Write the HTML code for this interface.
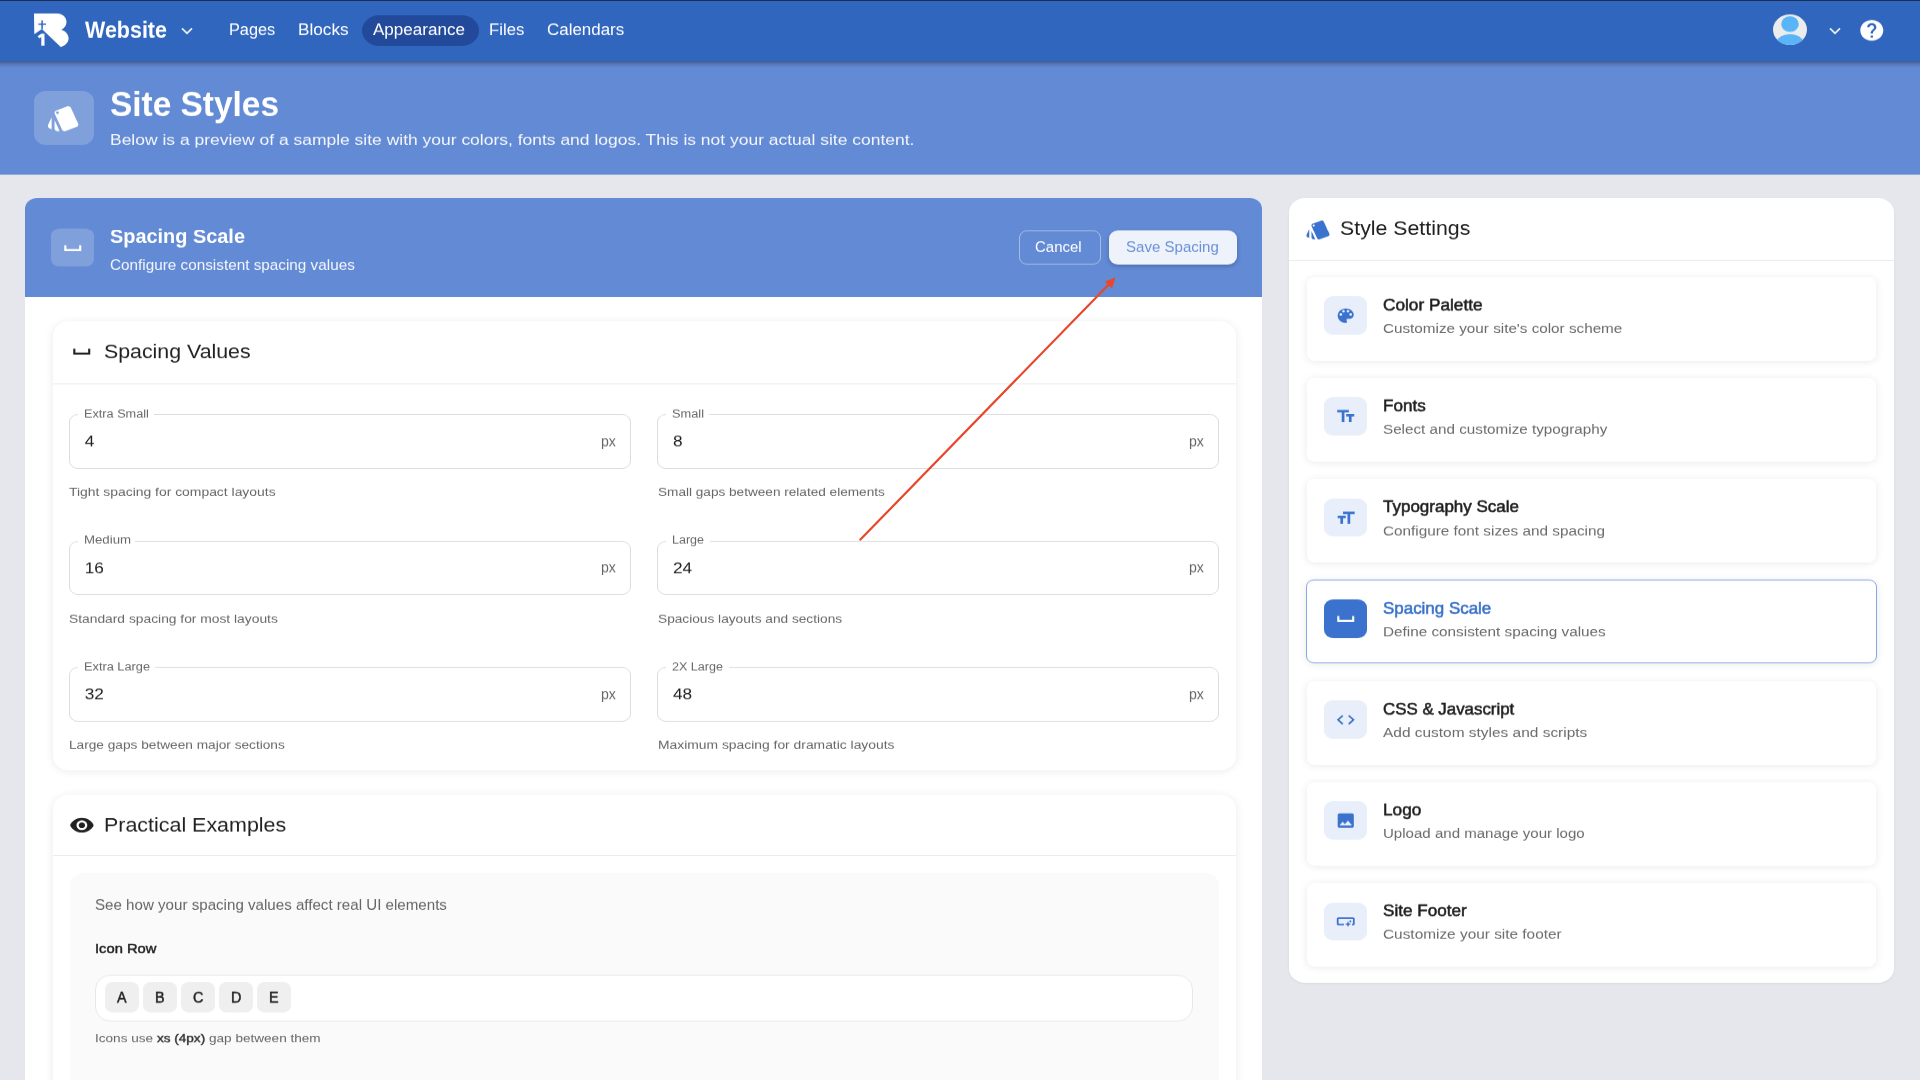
<!DOCTYPE html>
<html><head><meta charset="utf-8"><title>Site Styles</title>
<style>
*{box-sizing:border-box;margin:0;padding:0}
html,body{width:1920px;height:1080px;overflow:hidden;background:#e6e7ec}
#root{position:absolute;left:0;top:0;width:1920px;height:1200px;will-change:transform;transform:scale(1,0.9);transform-origin:0 0;background:#e6e7ec;overflow:hidden;font-family:"Liberation Sans",sans-serif}
.abs{position:absolute}
.tx{position:absolute;white-space:nowrap;transform-origin:0 50%}
.sub{position:absolute;background:#fff;border-radius:16px;box-shadow:0 1px 10px rgba(0,0,0,.085)}
.field{position:absolute;width:562px;height:60.3px;border:1.4px solid #dcdcdc;border-radius:9px}
.item{position:absolute;width:569px;background:#fff;border-radius:8px;box-shadow:0 1px 8px rgba(0,0,0,.09)}
</style></head><body>
<div id="root">
<div class="abs" style="left:0;top:66px;width:1920px;height:127.7px;background:#638ad4;border-bottom:1px solid #5c84d0"></div>
<div class="abs" style="left:0;top:0;width:1920px;height:67.7px;background:#3166be;border-top:1.2px solid #1a2a4c"></div>
<div class="abs" style="left:0;top:67.7px;width:1920px;height:7px;background:linear-gradient(rgba(40,50,80,.55),rgba(40,50,80,.25) 40%,rgba(40,50,80,0))"></div>
<div class="abs" style="left:361.7px;top:17.22px;width:117.2px;height:33.89px;border-radius:20px;background:#22499a"></div>
<div class="abs" style="left:34px;top:101.11px;width:60px;height:60px;border-radius:12px;background:rgba(255,255,255,.19)"></div>
<svg class="abs" style="left:46.10px;top:113.83px;" width="35" height="35" viewBox="0 0 24 24"><path fill="#fff" d="M2.53 19.65l1.34.56v-9.03l-2.43 5.86c-.41 1.02.08 2.19 1.09 2.61zm19.5-3.7L17.07 3.98c-.31-.75-1.04-1.21-1.81-1.23-.26 0-.53.04-.79.15L7.1 5.95c-.75.31-1.21 1.03-1.23 1.8-.01.27.04.54.15.8l4.96 11.97c.31.76 1.05 1.22 1.83 1.23.26 0 .52-.05.77-.15l7.36-3.05c1.02-.42 1.51-1.59 1.09-2.6zM7.88 8.75c-.55 0-1-.45-1-1s.45-1 1-1 1 .45 1 1-.45 1-1 1zm-2 11c0 1.1.9 2 2 2h1.45l-3.45-8.34v6.34z"/></svg>
<div class="abs" style="left:25px;top:220px;width:1237px;height:1000px;background:#fff;border-radius:12px 12px 0 0;overflow:hidden"><div class="abs" style="left:0;top:0;width:100%;height:110.3px;background:#638ad4"></div></div>
<div class="abs" style="left:51.25px;top:253.89px;width:42.6px;height:42.6px;border-radius:8px;background:rgba(255,255,255,.19)"></div>
<svg class="abs" style="left:59.85px;top:262.69px;" width="25.5" height="25.5" viewBox="0 0 24 24"><path fill="#fff" d="M18 9v4H6V9H4v6h16V9z"/></svg>
<div class="abs" style="left:1019px;top:255.56px;width:81.6px;height:38.89px;border:1px solid rgba(255,255,255,.42);border-radius:8px"></div>
<div class="abs" style="left:1108.6px;top:255.56px;width:128.4px;height:38.89px;border-radius:9px;background:#eef2fb;box-shadow:0 2px 4px rgba(20,40,90,.32)"></div>
<div class="sub" style="left:52.6px;top:356.67px;width:1183.1px;height:499.33px"><div class="abs" style="left:0;top:68.89px;width:100%;height:1px;background:#ebebeb"></div></div>
<svg class="abs" style="left:69.35px;top:377.92px;" width="25.5" height="25.5" viewBox="0 0 24 24"><path fill="#212121" d="M18 9v4H6V9H4v6h16V9z"/></svg>
<div class="sub" style="left:52.6px;top:882.67px;width:1183.1px;height:600px"><div class="abs" style="left:0;top:67.33px;width:100%;height:1px;background:#ebebeb"></div></div>
<svg class="abs" style="left:69.20px;top:904.32px;" width="25.8" height="25.8" viewBox="0 0 24 24"><path fill="#212121" d="M12 4.5C7 4.5 2.73 7.61 1 12c1.73 4.39 6 7.5 11 7.5s9.27-3.11 11-7.5c-1.73-4.39-6-7.5-11-7.5zM12 17c-2.76 0-5-2.24-5-5s2.24-5 5-5 5 2.24 5 5-2.24 5-5 5zm0-8c-1.66 0-3 1.34-3 3s1.34 3 3 3 3-1.34 3-3-1.34-3-3-3z"/></svg>
<div class="abs" style="left:70px;top:970.00px;width:1148.5px;height:400px;border-radius:14px;background:#fafafa"></div>
<div class="abs" style="left:95.3px;top:1082.67px;width:1098px;height:51.89px;border:1px solid #e8e8e8;border-radius:16px;background:#fff"></div>
<div class="abs" style="left:104.80px;top:1091.22px;width:33.8px;height:34.2px;border-radius:8px;background:#efefef"></div>
<div class="abs" style="left:142.90px;top:1091.22px;width:33.8px;height:34.2px;border-radius:8px;background:#efefef"></div>
<div class="abs" style="left:181.00px;top:1091.22px;width:33.8px;height:34.2px;border-radius:8px;background:#efefef"></div>
<div class="abs" style="left:219.10px;top:1091.22px;width:33.8px;height:34.2px;border-radius:8px;background:#efefef"></div>
<div class="abs" style="left:257.20px;top:1091.22px;width:33.8px;height:34.2px;border-radius:8px;background:#efefef"></div>
<div class="abs" style="left:1289.3px;top:220.33px;width:605px;height:871.56px;background:#fff;border-radius:16px;box-shadow:0 1px 3px rgba(0,0,0,.06)"><div class="abs" style="left:0;top:68.56px;width:100%;height:1.2px;background:#ebebeb"></div></div>
<svg class="abs" style="left:1305.15px;top:241.75px;" width="26.5" height="26.5" viewBox="0 0 24 24"><path fill="#3a72cd" d="M2.53 19.65l1.34.56v-9.03l-2.43 5.86c-.41 1.02.08 2.19 1.09 2.61zm19.5-3.7L17.07 3.98c-.31-.75-1.04-1.21-1.81-1.23-.26 0-.53.04-.79.15L7.1 5.95c-.75.31-1.21 1.03-1.23 1.8-.01.27.04.54.15.8l4.96 11.97c.31.76 1.05 1.22 1.83 1.23.26 0 .52-.05.77-.15l7.36-3.05c1.02-.42 1.51-1.59 1.09-2.6zM7.88 8.75c-.55 0-1-.45-1-1s.45-1 1-1 1 .45 1 1-.45 1-1 1zm-2 11c0 1.1.9 2 2 2h1.45l-3.45-8.34v6.34z"/></svg>
<div class="item" style="left:1307px;top:307.78px;height:92.89px;"></div>
<div class="abs" style="left:1324.2px;top:329.22px;width:42.8px;height:42.8px;border-radius:9px;background:#e9effa"></div>
<svg class="abs" style="left:1334.85px;top:340.14px;" width="21.5" height="21.5" viewBox="0 0 24 24"><path fill="#3a72cd" d="M12 3c-4.97 0-9 4.03-9 9s4.03 9 9 9c.83 0 1.5-.67 1.5-1.5 0-.39-.15-.74-.39-1.01-.23-.26-.38-.61-.38-.99 0-.83.67-1.5 1.5-1.5H16c2.76 0 5-2.24 5-5 0-4.42-4.03-8-9-8zm-5.5 9c-.83 0-1.5-.67-1.5-1.5S5.67 9 6.5 9 8 9.67 8 10.5 7.33 12 6.5 12zm3-4C8.67 8 8 7.33 8 6.5S8.67 5 9.5 5s1.5.67 1.5 1.5S10.33 8 9.5 8zm5 0c-.83 0-1.5-.67-1.5-1.5S13.67 5 14.5 5s1.5.67 1.5 1.5S15.33 8 14.5 8zm3 4c-.83 0-1.5-.67-1.5-1.5S16.67 9 17.5 9s1.5.67 1.5 1.5-.67 1.5-1.5 1.5z"/></svg>
<div class="item" style="left:1307px;top:420.00px;height:92.89px;"></div>
<div class="abs" style="left:1324.2px;top:441.44px;width:42.8px;height:42.8px;border-radius:9px;background:#e9effa"></div>
<svg class="abs" style="left:1334.85px;top:452.36px;" width="21.5" height="21.5" viewBox="0 0 24 24"><path fill="#3a72cd" d="M2.5 4v3h5v12h3V7h5V4h-13zm19 5h-9v3h3v7h3v-7h3V9z"/></svg>
<div class="item" style="left:1307px;top:532.22px;height:92.89px;"></div>
<div class="abs" style="left:1324.2px;top:553.67px;width:42.8px;height:42.8px;border-radius:9px;background:#e9effa"></div>
<svg class="abs" style="left:1334.85px;top:564.58px;" width="21.5" height="21.5" viewBox="0 0 24 24"><path fill="#3a72cd" d="M9 4v3h5v12h3V7h5V4H9zm-6 8h3v7h3v-7h3V9H3v3z"/></svg>
<div class="item" style="left:1307px;top:644.44px;height:92.89px;border:1.5px solid #86a8e6;left:1306px!important;width:571px;"></div>
<div class="abs" style="left:1324.2px;top:665.89px;width:42.8px;height:42.8px;border-radius:9px;background:#3a72cd"></div>
<svg class="abs" style="left:1332.85px;top:674.81px;" width="25.5" height="25.5" viewBox="0 0 24 24"><path fill="#fff" d="M18 9v4H6V9H4v6h16V9z"/></svg>
<div class="item" style="left:1307px;top:756.67px;height:92.89px;"></div>
<div class="abs" style="left:1324.2px;top:778.11px;width:42.8px;height:42.8px;border-radius:9px;background:#e9effa"></div>
<svg class="abs" style="left:1334.85px;top:789.03px;" width="21.5" height="21.5" viewBox="0 0 24 24"><path fill="#3a72cd" d="M9.4 16.6L4.8 12l4.6-4.6L8 6l-6 6 6 6 1.4-1.4zm5.2 0l4.6-4.6-4.6-4.6L16 6l6 6-6 6-1.4-1.4z"/></svg>
<div class="item" style="left:1307px;top:868.89px;height:92.89px;"></div>
<div class="abs" style="left:1324.2px;top:890.33px;width:42.8px;height:42.8px;border-radius:9px;background:#e9effa"></div>
<svg class="abs" style="left:1334.85px;top:901.25px;" width="21.5" height="21.5" viewBox="0 0 24 24"><path fill="#3a72cd" d="M21 19V5c0-1.1-.9-2-2-2H5c-1.1 0-2 .9-2 2v14c0 1.1.9 2 2 2h14c1.1 0 2-.9 2-2zM8.5 13.5l2.5 3.01L14.5 12l4.5 6H5l3.5-4.5z"/></svg>
<div class="item" style="left:1307px;top:981.11px;height:92.89px;"></div>
<div class="abs" style="left:1324.2px;top:1002.56px;width:42.8px;height:42.8px;border-radius:9px;background:#e9effa"></div>
<svg class="abs" style="left:1334.85px;top:1013.47px;" width="21.5" height="21.5" viewBox="0 0 24 24"><path fill="#3a72cd" d="M22 9v6c0 1.1-.9 2-2 2h-1v-2h1V9H4v6h6v2H4c-1.1 0-2-.9-2-2V9c0-1.1.9-2 2-2h16c1.1 0 2 .9 2 2zm-7.5 10 1.09-2.41L18 15.5l-2.41-1.09L14.5 12l-1.09 2.41L11 15.5l2.41 1.09L14.5 19zm2.5-5 .62-1.38L19 12l-1.38-.62L17 10l-.62 1.38L15 12l1.38.62L17 14z"/></svg>
<div class="field" style="left:69.3px;top:460.22px"></div>
<div class="field" style="left:657.4px;top:460.22px"></div>
<div class="field" style="left:69.3px;top:600.78px"></div>
<div class="field" style="left:657.4px;top:600.78px"></div>
<div class="field" style="left:69.3px;top:741.33px"></div>
<div class="field" style="left:657.4px;top:741.33px"></div>
<div class="abs" style="left:77.80px;top:453.11px;width:76.68px;height:13.33px;background:#fff"></div>
<div class="abs" style="left:665.90px;top:453.11px;width:43.43px;height:13.33px;background:#fff"></div>
<div class="abs" style="left:77.80px;top:593.67px;width:56.88px;height:13.33px;background:#fff"></div>
<div class="abs" style="left:665.90px;top:593.67px;width:44.16px;height:13.33px;background:#fff"></div>
<div class="abs" style="left:77.80px;top:734.22px;width:77.41px;height:13.33px;background:#fff"></div>
<div class="abs" style="left:665.90px;top:734.22px;width:63.26px;height:13.33px;background:#fff"></div>
<svg class="abs" style="left:34px;top:15.2px" width="35" height="38" viewBox="0 0 35 38">
<path fill="#fff" d="M0,0 H23.2 C28.6,0 32.5,4.3 32.5,9.4 C32.5,13.2 30.4,16.3 27.3,17.9 C31.6,19.4 34.6,23.3 34.6,27.6 C34.6,32.2 31.3,36 26.8,37.2 L7.9,17.3 L0.3,22.9 Z"/>
<rect x="7.35" y="7.6" width="1.5" height="9.8" fill="#3166be"/>
<rect x="4.4" y="11.2" width="7.6" height="1.5" fill="#3166be"/>
<path fill="#fff" d="M7.3,22.4 L10.5,22.4 L10.5,35.8 L7.3,35.8 L7.3,26.2 L5.2,27.6 L3.6,25.2 Z"/>
</svg><svg class="abs" style="left:181px;top:30.29px" width="12" height="10" viewBox="0 0 12 10"><polyline points="1,1.5 6,7 11,1.5" fill="none" stroke="#fff" stroke-width="1.8"/></svg><svg class="abs" style="left:1773px;top:16.4px" width="34" height="34" viewBox="0 0 34 34">
<defs><clipPath id="avc"><circle cx="17" cy="17" r="17"/></clipPath></defs>
<circle cx="17" cy="17" r="17" fill="#ececec"/>
<g clip-path="url(#avc)"><circle cx="17" cy="10.8" r="8.8" fill="#5ab5f8"/><ellipse cx="17" cy="36" rx="15.5" ry="14" fill="#5ab5f8"/></g>
</svg><svg class="abs" style="left:1829px;top:29.61px" width="12" height="10" viewBox="0 0 12 10"><polyline points="1,1.5 6,7 11,1.5" fill="none" stroke="#fff" stroke-width="1.8"/></svg><svg class="abs" style="left:1858.20px;top:19.64px;" width="27.6" height="27.6" viewBox="0 0 24 24"><path fill="#fff" d="M12 2C6.48 2 2 6.48 2 12s4.48 10 10 10 10-4.48 10-10S17.52 2 12 2zm1 17h-2v-2h2v2zm2.07-7.75l-.9.92C13.45 12.9 13 13.5 13 15h-2v-.5c0-1.1.45-2.1 1.17-2.83l1.24-1.26c.37-.36.59-.86.59-1.41 0-1.1-.9-2-2-2s-2 .9-2 2H8c0-2.21 1.79-4 4-4s4 1.79 4 4c0 .88-.36 1.68-.93 2.25z"/></svg>
<div class="tx" style="left:85.20px;top:20.54px;font-size:25.12px;line-height:25.12px;font-weight:700;color:#fff;transform:scaleX(0.8554);">Website</div>
<div class="tx" style="left:229.00px;top:24.67px;font-size:17.78px;line-height:17.78px;color:#fff;transform:scaleX(0.9175);">Pages</div>
<div class="tx" style="left:297.90px;top:24.67px;font-size:17.78px;line-height:17.78px;color:#fff;transform:scaleX(0.9664);">Blocks</div>
<div class="tx" style="left:489.00px;top:24.67px;font-size:17.78px;line-height:17.78px;color:#fff;transform:scaleX(0.9404);">Files</div>
<div class="tx" style="left:546.50px;top:24.67px;font-size:17.78px;line-height:17.78px;color:#fff;transform:scaleX(0.9527);">Calendars</div>
<div class="tx" style="left:372.90px;top:25.11px;font-size:17.78px;line-height:17.78px;color:#fff;transform:scaleX(0.9596);">Appearance</div>
<div class="tx" style="left:110.20px;top:96.44px;font-size:39.61px;line-height:39.61px;font-weight:700;color:#fff;transform:scaleX(0.8434);">Site Styles</div>
<div class="tx" style="left:110.00px;top:147.02px;font-size:17.23px;line-height:17.23px;color:rgba(255,255,255,.92);transform:scaleX(1.0143);">Below is a preview of a sample site with your colors, fonts and logos. This is not your actual site content.</div>
<div class="tx" style="left:110.00px;top:250.56px;font-size:22.87px;line-height:22.87px;font-weight:700;color:#fff;transform:scaleX(0.8707);">Spacing Scale</div>
<div class="tx" style="left:110.00px;top:286.72px;font-size:15.62px;line-height:15.62px;color:rgba(255,255,255,.92);transform:scaleX(0.9797);">Configure consistent spacing values</div>
<div class="tx" style="left:1035.40px;top:267.01px;font-size:16.59px;line-height:16.59px;color:#fff;transform:scaleX(0.9026);">Cancel</div>
<div class="tx" style="left:1125.80px;top:267.01px;font-size:16.59px;line-height:16.59px;color:#6a91d8;transform:scaleX(0.9077);">Save Spacing</div>
<div class="tx" style="left:103.60px;top:380.68px;font-size:21.42px;line-height:21.42px;color:#212121;transform:scaleX(0.9963);">Spacing Values</div>
<div class="tx" style="left:103.60px;top:905.99px;font-size:21.58px;line-height:21.58px;color:#212121;transform:scaleX(0.9930);">Practical Examples</div>
<div class="tx" style="left:83.60px;top:452.59px;font-size:13.69px;line-height:13.69px;color:#666;transform:scaleX(0.9275);">Extra Small</div>
<div class="tx" style="left:84.80px;top:482.14px;font-size:17.23px;line-height:17.23px;color:#212121;transform:scaleX(1.0000);">4</div>
<div class="tx" style="left:601.10px;top:482.72px;font-size:15.63px;line-height:15.63px;color:#666;transform:scaleX(0.9026);">px</div>
<div class="tx" style="left:69.40px;top:540.25px;font-size:13.04px;line-height:13.04px;color:#666;transform:scaleX(1.0670);">Tight spacing for compact layouts</div>
<div class="tx" style="left:671.70px;top:452.59px;font-size:13.69px;line-height:13.69px;color:#666;transform:scaleX(0.9349);">Small</div>
<div class="tx" style="left:672.90px;top:482.14px;font-size:17.23px;line-height:17.23px;color:#212121;transform:scaleX(1.0000);">8</div>
<div class="tx" style="left:1189.20px;top:482.72px;font-size:15.63px;line-height:15.63px;color:#666;transform:scaleX(0.9026);">px</div>
<div class="tx" style="left:657.50px;top:540.25px;font-size:13.04px;line-height:13.04px;color:#666;transform:scaleX(1.0436);">Small gaps between related elements</div>
<div class="tx" style="left:83.60px;top:593.14px;font-size:13.69px;line-height:13.69px;color:#666;transform:scaleX(0.9654);">Medium</div>
<div class="tx" style="left:84.80px;top:622.69px;font-size:17.23px;line-height:17.23px;color:#212121;transform:scaleX(1.0000);">16</div>
<div class="tx" style="left:601.10px;top:623.27px;font-size:15.63px;line-height:15.63px;color:#666;transform:scaleX(0.9026);">px</div>
<div class="tx" style="left:69.40px;top:680.80px;font-size:13.04px;line-height:13.04px;color:#666;transform:scaleX(1.0598);">Standard spacing for most layouts</div>
<div class="tx" style="left:671.70px;top:593.14px;font-size:13.69px;line-height:13.69px;color:#666;transform:scaleX(0.9141);">Large</div>
<div class="tx" style="left:672.90px;top:622.69px;font-size:17.23px;line-height:17.23px;color:#212121;transform:scaleX(1.0000);">24</div>
<div class="tx" style="left:1189.20px;top:623.27px;font-size:15.63px;line-height:15.63px;color:#666;transform:scaleX(0.9026);">px</div>
<div class="tx" style="left:657.50px;top:680.80px;font-size:13.04px;line-height:13.04px;color:#666;transform:scaleX(1.0503);">Spacious layouts and sections</div>
<div class="tx" style="left:83.60px;top:733.70px;font-size:13.69px;line-height:13.69px;color:#666;transform:scaleX(0.9328);">Extra Large</div>
<div class="tx" style="left:84.80px;top:763.25px;font-size:17.23px;line-height:17.23px;color:#212121;transform:scaleX(1.0000);">32</div>
<div class="tx" style="left:601.10px;top:763.83px;font-size:15.63px;line-height:15.63px;color:#666;transform:scaleX(0.9026);">px</div>
<div class="tx" style="left:69.40px;top:821.36px;font-size:13.04px;line-height:13.04px;color:#666;transform:scaleX(1.0490);">Large gaps between major sections</div>
<div class="tx" style="left:671.70px;top:733.70px;font-size:13.69px;line-height:13.69px;color:#666;transform:scaleX(0.9181);">2X Large</div>
<div class="tx" style="left:672.90px;top:763.25px;font-size:17.23px;line-height:17.23px;color:#212121;transform:scaleX(1.0000);">48</div>
<div class="tx" style="left:1189.20px;top:763.83px;font-size:15.63px;line-height:15.63px;color:#666;transform:scaleX(0.9026);">px</div>
<div class="tx" style="left:657.50px;top:821.36px;font-size:13.04px;line-height:13.04px;color:#666;transform:scaleX(1.0636);">Maximum spacing for dramatic layouts</div>
<div class="tx" style="left:1340.00px;top:243.21px;font-size:21.58px;line-height:21.58px;color:#212121;transform:scaleX(0.9876);">Style Settings</div>
<div class="tx" style="left:1383.00px;top:328.96px;font-size:19.00px;line-height:19.00px;-webkit-text-stroke:0.61px #1f1f1f;color:#1f1f1f;transform:scaleX(0.9067);">Color Palette</div>
<div class="tx" style="left:1383.00px;top:357.11px;font-size:15.30px;line-height:15.30px;color:#6b6b6b;transform:scaleX(0.9966);">Customize your site's color scheme</div>
<div class="tx" style="left:1383.00px;top:441.18px;font-size:19.00px;line-height:19.00px;-webkit-text-stroke:0.61px #1f1f1f;color:#1f1f1f;transform:scaleX(0.8985);">Fonts</div>
<div class="tx" style="left:1383.00px;top:469.33px;font-size:15.30px;line-height:15.30px;color:#6b6b6b;transform:scaleX(0.9954);">Select and customize typography</div>
<div class="tx" style="left:1383.00px;top:553.40px;font-size:19.00px;line-height:19.00px;-webkit-text-stroke:0.61px #1f1f1f;color:#1f1f1f;transform:scaleX(0.8941);">Typography Scale</div>
<div class="tx" style="left:1383.00px;top:581.55px;font-size:15.30px;line-height:15.30px;color:#6b6b6b;transform:scaleX(1.0002);">Configure font sizes and spacing</div>
<div class="tx" style="left:1383.00px;top:665.63px;font-size:19.00px;line-height:19.00px;-webkit-text-stroke:0.61px #3a72c9;color:#3a72c9;transform:scaleX(0.8915);">Spacing Scale</div>
<div class="tx" style="left:1383.00px;top:693.77px;font-size:15.30px;line-height:15.30px;color:#6b6b6b;transform:scaleX(0.9996);">Define consistent spacing values</div>
<div class="tx" style="left:1383.00px;top:777.85px;font-size:19.00px;line-height:19.00px;-webkit-text-stroke:0.61px #1f1f1f;color:#1f1f1f;transform:scaleX(0.8881);">CSS &amp; Javascript</div>
<div class="tx" style="left:1383.00px;top:806.00px;font-size:15.30px;line-height:15.30px;color:#6b6b6b;transform:scaleX(1.0096);">Add custom styles and scripts</div>
<div class="tx" style="left:1383.00px;top:890.07px;font-size:19.00px;line-height:19.00px;-webkit-text-stroke:0.61px #1f1f1f;color:#1f1f1f;transform:scaleX(0.9060);">Logo</div>
<div class="tx" style="left:1383.00px;top:918.22px;font-size:15.30px;line-height:15.30px;color:#6b6b6b;transform:scaleX(0.9841);">Upload and manage your logo</div>
<div class="tx" style="left:1383.00px;top:1002.29px;font-size:19.00px;line-height:19.00px;-webkit-text-stroke:0.61px #1f1f1f;color:#1f1f1f;transform:scaleX(0.9006);">Site Footer</div>
<div class="tx" style="left:1383.00px;top:1030.44px;font-size:15.30px;line-height:15.30px;color:#6b6b6b;transform:scaleX(1.0056);">Customize your site footer</div>
<div class="tx" style="left:95.00px;top:997.78px;font-size:15.94px;line-height:15.94px;color:#666;transform:scaleX(0.9488);">See how your spacing values affect real UI elements</div>
<div class="tx" style="left:95.00px;top:1045.75px;font-size:15.46px;line-height:15.46px;-webkit-text-stroke:0.49px #212121;color:#212121;transform:scaleX(0.9528);">Icon Row</div>
<div class="tx" style="left:116.91px;top:1101.00px;font-size:15.94px;line-height:15.94px;-webkit-text-stroke:0.51px #222;color:#222;transform:scaleX(0.9000);">A</div>
<div class="tx" style="left:155.01px;top:1101.00px;font-size:15.94px;line-height:15.94px;-webkit-text-stroke:0.51px #222;color:#222;transform:scaleX(0.9000);">B</div>
<div class="tx" style="left:192.72px;top:1101.00px;font-size:15.94px;line-height:15.94px;-webkit-text-stroke:0.51px #222;color:#222;transform:scaleX(0.9000);">C</div>
<div class="tx" style="left:230.82px;top:1101.00px;font-size:15.94px;line-height:15.94px;-webkit-text-stroke:0.51px #222;color:#222;transform:scaleX(0.9000);">D</div>
<div class="tx" style="left:269.31px;top:1101.00px;font-size:15.94px;line-height:15.94px;-webkit-text-stroke:0.51px #222;color:#222;transform:scaleX(0.9000);">E</div>
<div class="tx" style="left:95.00px;top:1148.46px;font-size:12.40px;line-height:12.40px;color:#666;transform:scaleX(1.0957);">Icons use <span style="color:#333;-webkit-text-stroke:0.42px #333">xs (4px)</span> gap between them</div>
</div>
<svg style="position:absolute;left:0;top:0;z-index:10" width="1920" height="1080" viewBox="0 0 1920 1080">
<line x1="860.4" y1="539.6" x2="1109" y2="284.2" stroke="#e8472b" stroke-width="2.2" stroke-linecap="round"/>
<polygon points="1115.6,277.4 1104.8,281.6 1112.0,288.6" fill="#e8472b"/>
</svg>
</body></html>
